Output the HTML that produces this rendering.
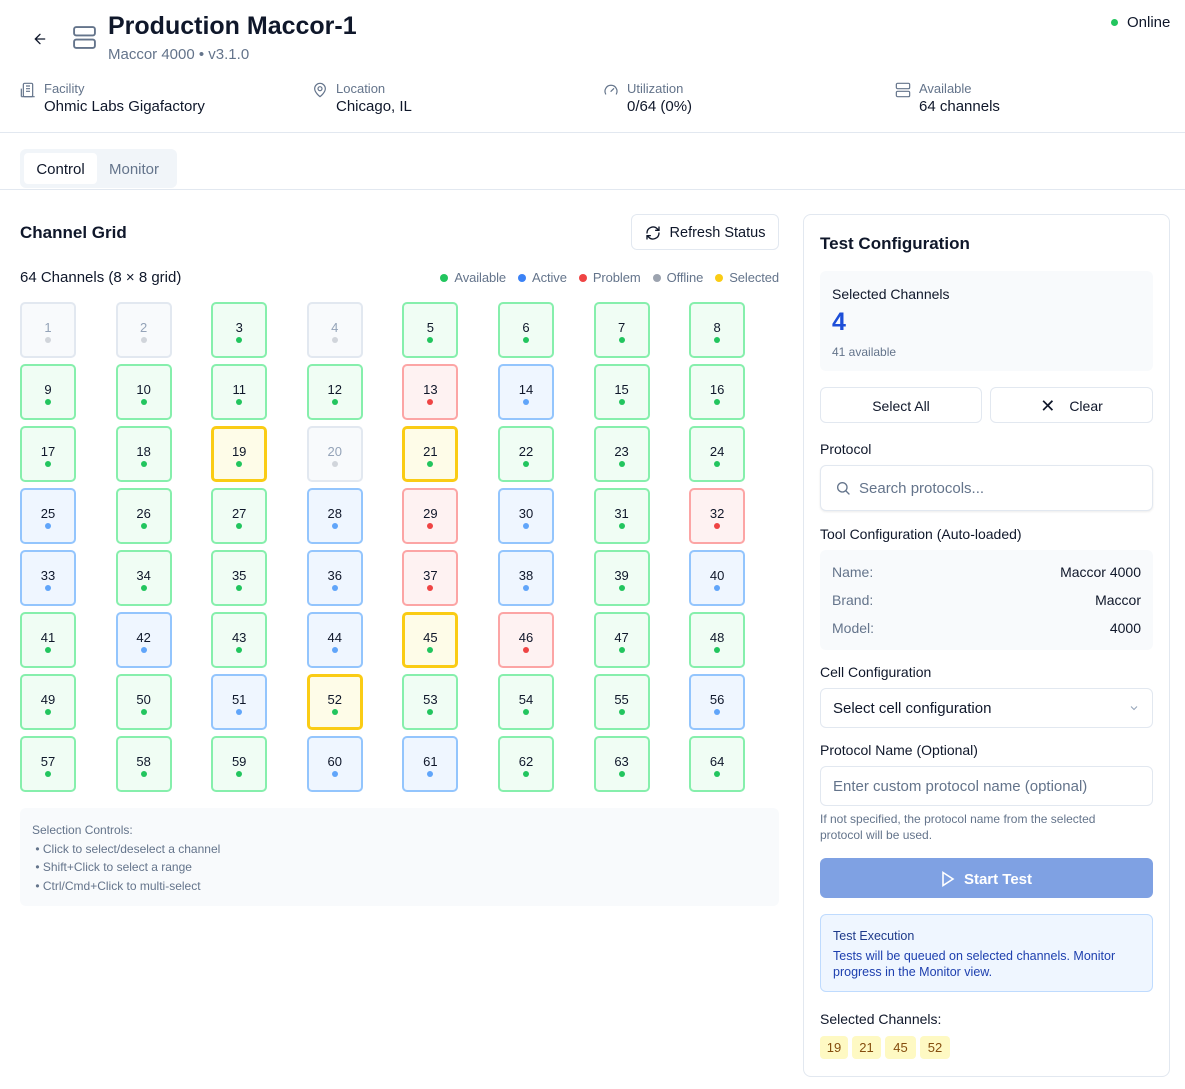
<!DOCTYPE html>
<html><head><meta charset="utf-8"><style>
*{box-sizing:border-box;margin:0;padding:0}
body{width:1185px;height:1089px;position:relative;background:#fff;font-family:"Liberation Sans",sans-serif;color:#0f172a;overflow:hidden}
.a{position:absolute}
.lbl{font-size:13px;color:#64748b}
.val{font-size:15px;color:#0f172a}
.grid{position:absolute;left:20px;top:302px;display:grid;grid-template-columns:repeat(8,95.6px);grid-auto-rows:56px;row-gap:6px}
.c{width:56px;height:56px;border:2px solid #86efac;background:#f0fdf4;border-radius:5px;display:flex;flex-direction:column;align-items:center;justify-content:center;font-size:13px;color:#0f172a;padding-top:2px}
.c i{display:block;width:6px;height:6px;border-radius:50%;background:#22c55e;margin-top:2px}
.o{border-color:#e2e8f0;background:#f8fafc;color:#94a3b8}.o i{background:#d1d5db}
.b{border-color:#93c5fd;background:#eff6ff}.b i{background:#60a5fa}
.p{border-color:#fca5a5;background:#fef2f2}.p i{background:#ef4444}
.s{border:3px solid #facc15;background:#fefce8}
.btn{border:1px solid #e2e8f0;border-radius:6px;background:#fff;display:flex;align-items:center;justify-content:center;font-size:14px;color:#0f172a}
.leg span{display:inline-block;width:8px;height:8px;border-radius:50%;margin:0 6px 0 12px;vertical-align:0}
.row{display:flex;justify-content:space-between;font-size:14px;margin-bottom:12px}
.row b{font-weight:normal;color:#0f172a}.row em{font-style:normal;color:#64748b}
.tag{display:inline-block;background:#fef9c3;color:#854d0e;border-radius:4px;font-size:13px;padding:4px 0;text-align:center;margin-right:4px}
</style></head><body>
<svg class="a" style="left:32px;top:31px" width="16" height="16" viewBox="0 0 24 24" fill="none" stroke="#0f172a" stroke-width="2" stroke-linecap="round"><path d="M19 12H5M12 19l-7-7 7-7"/></svg>
<svg class="a" style="left:72px;top:25px" width="25" height="25" viewBox="0 0 24 24" fill="none" stroke="#64748b" stroke-width="1.8"><rect x="2" y="2" width="20" height="8" rx="2"/><rect x="2" y="14" width="20" height="8" rx="2"/><path d="M6 6h.01M6 18h.01"/></svg>
<div class="a" style="left:108px;top:12px;font-size:25px;font-weight:bold">Production Maccor-1</div>
<div class="a" style="left:108px;top:46px;font-size:15px;color:#64748b">Maccor 4000 • v3.1.0</div>
<div class="a" style="left:1111px;top:19px;width:7px;height:7px;border-radius:50%;background:#22c55e"></div>
<div class="a" style="left:1127px;top:14px;font-size:15px">Online</div>

<svg class="a" style="left:20px;top:82px" width="16" height="16" viewBox="0 0 24 24" fill="none" stroke="#64748b" stroke-width="1.8"><rect x="5" y="2" width="14" height="20" rx="2"/><path d="M9 6h6M9 10h6M9 14h6M2 22h20M2 10v12"/></svg>
<div class="a lbl" style="left:44px;top:81px">Facility</div><div class="a val" style="left:44px;top:98px">Ohmic Labs Gigafactory</div>
<svg class="a" style="left:312px;top:82px" width="16" height="16" viewBox="0 0 24 24" fill="none" stroke="#64748b" stroke-width="1.8"><path d="M20 10c0 6-8 12-8 12s-8-6-8-12a8 8 0 0 1 16 0z"/><circle cx="12" cy="10" r="3"/></svg>
<div class="a lbl" style="left:336px;top:81px">Location</div><div class="a val" style="left:336px;top:98px">Chicago, IL</div>
<svg class="a" style="left:603px;top:82px" width="16" height="16" viewBox="0 0 24 24" fill="none" stroke="#64748b" stroke-width="1.8" stroke-linecap="round"><path d="M4 18a9 9 0 1 1 16 0"/><path d="M12 14l4-4"/></svg>
<div class="a lbl" style="left:627px;top:81px">Utilization</div><div class="a val" style="left:627px;top:98px">0/64 (0%)</div>
<svg class="a" style="left:895px;top:82px" width="16" height="16" viewBox="0 0 24 24" fill="none" stroke="#64748b" stroke-width="1.8"><rect x="2" y="2" width="20" height="8" rx="2"/><rect x="2" y="14" width="20" height="8" rx="2"/></svg>
<div class="a lbl" style="left:919px;top:81px">Available</div><div class="a val" style="left:919px;top:98px">64 channels</div>
<div class="a" style="left:0;top:132px;width:1185px;height:1px;background:#e2e8f0"></div>

<div class="a" style="left:20px;top:149px;width:157px;height:39px;background:#f1f5f9;border-radius:6px"></div>
<div class="a" style="left:24px;top:153px;width:73px;height:31px;background:#fff;border-radius:4px;font-size:15px;text-align:center;line-height:33px">Control</div>
<div class="a" style="left:109px;top:153px;font-size:15px;color:#64748b;line-height:33px">Monitor</div>
<div class="a" style="left:0;top:189px;width:1185px;height:1px;background:#e2e8f0"></div>

<div class="a" style="left:20px;top:223px;font-size:17px;font-weight:bold">Channel Grid</div>
<div class="a btn" style="left:631px;top:214px;width:148px;height:36px;font-size:14.5px;padding-top:2px"><svg width="16" height="16" viewBox="0 0 24 24" fill="none" stroke="#0f172a" stroke-width="2" stroke-linecap="round" style="margin-right:9px"><path d="M3 12a9 9 0 0 1 15.5-6.2L21 8M21 3v5h-5M21 12a9 9 0 0 1-15.5 6.2L3 16M3 21v-5h5"/></svg>Refresh Status</div>
<div class="a" style="left:20px;top:269px;font-size:15px">64 Channels (8 × 8 grid)</div>
<div class="a leg" style="right:406px;top:270px;font-size:13px;color:#64748b;white-space:nowrap;letter-spacing:-0.1px"><span style="background:#22c55e"></span>Available<span style="background:#3b82f6"></span>Active<span style="background:#ef4444"></span>Problem<span style="background:#9ca3af"></span>Offline<span style="background:#facc15"></span>Selected</div>

<div class="grid">
<div class="c o">1<i></i></div><div class="c o">2<i></i></div><div class="c">3<i></i></div><div class="c o">4<i></i></div><div class="c">5<i></i></div><div class="c">6<i></i></div><div class="c">7<i></i></div><div class="c">8<i></i></div>
<div class="c">9<i></i></div><div class="c">10<i></i></div><div class="c">11<i></i></div><div class="c">12<i></i></div><div class="c p">13<i></i></div><div class="c b">14<i></i></div><div class="c">15<i></i></div><div class="c">16<i></i></div>
<div class="c">17<i></i></div><div class="c">18<i></i></div><div class="c s">19<i></i></div><div class="c o">20<i></i></div><div class="c s">21<i></i></div><div class="c">22<i></i></div><div class="c">23<i></i></div><div class="c">24<i></i></div>
<div class="c b">25<i></i></div><div class="c">26<i></i></div><div class="c">27<i></i></div><div class="c b">28<i></i></div><div class="c p">29<i></i></div><div class="c b">30<i></i></div><div class="c">31<i></i></div><div class="c p">32<i></i></div>
<div class="c b">33<i></i></div><div class="c">34<i></i></div><div class="c">35<i></i></div><div class="c b">36<i></i></div><div class="c p">37<i></i></div><div class="c b">38<i></i></div><div class="c">39<i></i></div><div class="c b">40<i></i></div>
<div class="c">41<i></i></div><div class="c b">42<i></i></div><div class="c">43<i></i></div><div class="c b">44<i></i></div><div class="c s">45<i></i></div><div class="c p">46<i></i></div><div class="c">47<i></i></div><div class="c">48<i></i></div>
<div class="c">49<i></i></div><div class="c">50<i></i></div><div class="c b">51<i></i></div><div class="c s">52<i></i></div><div class="c">53<i></i></div><div class="c">54<i></i></div><div class="c">55<i></i></div><div class="c b">56<i></i></div>
<div class="c">57<i></i></div><div class="c">58<i></i></div><div class="c">59<i></i></div><div class="c b">60<i></i></div><div class="c b">61<i></i></div><div class="c">62<i></i></div><div class="c">63<i></i></div><div class="c">64<i></i></div>
</div>

<div class="a" style="left:20px;top:808px;width:759px;height:98px;background:#f8fafc;border-radius:6px;padding:13px 12px;font-size:12px;color:#64748b;line-height:18.5px">
<div>Selection Controls:</div>
<div>&nbsp;• Click to select/deselect a channel</div>
<div>&nbsp;• Shift+Click to select a range</div>
<div>&nbsp;• Ctrl/Cmd+Click to multi-select</div>
</div>

<div class="a" style="left:803px;top:214px;width:367px;height:863px;border:1px solid #e2e8f0;border-radius:8px"></div>
<div class="a" style="left:820px;top:234px;font-size:17px;font-weight:bold">Test Configuration</div>
<div class="a" style="left:820px;top:271px;width:333px;height:100px;background:#f8fafc;border-radius:6px"></div>
<div class="a" style="left:832px;top:286px;font-size:14px">Selected Channels</div>
<div class="a" style="left:832px;top:308px;font-size:25px;font-weight:bold;color:#1d4ed8">4</div>
<div class="a" style="left:832px;top:345px;font-size:12px;color:#64748b">41 available</div>
<div class="a btn" style="left:820px;top:387px;width:162px;height:36px;padding-top:2px">Select All</div>
<div class="a btn" style="left:990px;top:387px;width:163px;height:36px;padding-top:2px"><span style="font-size:18px;margin-right:14px">✕</span>Clear</div>
<div class="a" style="left:820px;top:441px;font-size:14px">Protocol</div>
<div class="a btn" style="left:820px;top:465px;width:333px;height:46px;justify-content:flex-start;padding-left:14px;color:#64748b;font-size:15px;box-shadow:0 1px 2px rgba(0,0,0,.08)"><svg width="16" height="16" viewBox="0 0 24 24" fill="none" stroke="#64748b" stroke-width="2" stroke-linecap="round" style="margin-right:8px"><circle cx="11" cy="11" r="7"/><path d="M21 21l-4.5-4.5"/></svg>Search protocols...</div>
<div class="a" style="left:820px;top:526px;font-size:14px">Tool Configuration (Auto-loaded)</div>
<div class="a" style="left:820px;top:550px;width:333px;height:100px;background:#f8fafc;border-radius:6px;padding:14px 12px 0">
<div class="row"><em>Name:</em><b>Maccor 4000</b></div>
<div class="row"><em>Brand:</em><b>Maccor</b></div>
<div class="row"><em>Model:</em><b>4000</b></div>
</div>
<div class="a" style="left:820px;top:664px;font-size:14px">Cell Configuration</div>
<div class="a btn" style="left:820px;top:688px;width:333px;height:40px;justify-content:space-between;padding:0 12px;font-size:15px">Select cell configuration<svg width="12" height="12" viewBox="0 0 24 24" fill="none" stroke="#94a3b8" stroke-width="2"><path d="M6 9l6 6 6-6"/></svg></div>
<div class="a" style="left:820px;top:742px;font-size:14px">Protocol Name (Optional)</div>
<div class="a btn" style="left:820px;top:766px;width:333px;height:40px;justify-content:flex-start;padding-left:12px;color:#64748b;font-size:15px">Enter custom protocol name (optional)</div>
<div class="a" style="left:820px;top:811px;width:320px;font-size:12px;color:#64748b;line-height:16px">If not specified, the protocol name from the selected protocol will be used.</div>
<div class="a" style="left:820px;top:858px;width:333px;height:40px;background:#7fa1e3;border-radius:6px;color:#fff;font-size:15px;font-weight:bold;display:flex;align-items:center;justify-content:center;padding-top:2px"><svg width="14" height="16" viewBox="0 0 14 16" fill="none" stroke="#fff" stroke-width="1.6" style="margin-right:9px"><path d="M2 1.5l10 6.5-10 6.5z"/></svg>Start Test</div>
<div class="a" style="left:820px;top:914px;width:333px;height:78px;background:#eff6ff;border:1px solid #bfdbfe;border-radius:6px;padding:13px 12px;font-size:12.5px;color:#1e3a8a;line-height:16px">
<div style="margin-bottom:4px">Test Execution</div>
<div style="color:#1e40af">Tests will be queued on selected channels. Monitor progress in the Monitor view.</div>
</div>
<div class="a" style="left:820px;top:1011px;font-size:14px">Selected Channels:</div>
<div class="a" style="left:820px;top:1036px;white-space:nowrap"><span class="tag" style="width:28px">19</span><span class="tag" style="width:29px">21</span><span class="tag" style="width:31px">45</span><span class="tag" style="width:30px">52</span></div>
</body></html>
